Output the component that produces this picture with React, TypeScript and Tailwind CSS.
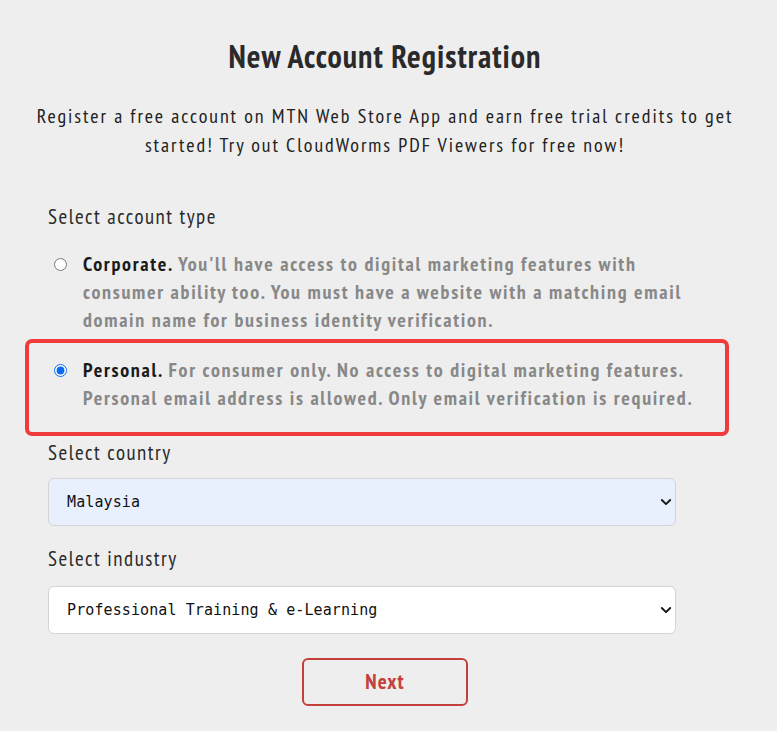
import React from "react";

const NARROW = "font-['PT_Sans_Narrow','Liberation_Sans_Narrow','DejaVu_Sans_Condensed',sans-serif]";

function Chevron() {
  return (
    <svg className="pointer-events-none absolute right-[4px] top-1/2 -translate-y-1/2" width="12" height="12" viewBox="0 0 12 12">
      <path d="M1.8 4 L6 8.2 L10.2 4" fill="none" stroke="#111" strokeWidth="1.8" strokeLinecap="round" strokeLinejoin="round" />
    </svg>
  );
}

function Select({ value, blue }: { value: string; blue?: boolean }) {
  return (
    <div className="relative w-[628px]">
      <select
        defaultValue={value}
        className={`h-[48px] w-full appearance-none rounded-[6px] border border-[#d4d4d4] pl-[18px] pr-8 font-['DejaVu_Sans_Mono','Liberation_Mono',monospace] text-[15px] tracking-[0.1px] text-[#111] outline-none ${blue ? "bg-[#e8f0fe]" : "bg-white"}`}
      >
        <option>{value}</option>
      </select>
      <Chevron />
    </div>
  );
}

export default function App() {
  return (
    <div className={`min-h-[731px] w-full bg-[#eeeeee] ${NARROW} text-[#222]`}>
      <div className="flex flex-col pl-[48px] pr-[55px] pt-[36px]">
        <h1 className="text-center text-[32px] font-bold leading-[40px] tracking-[1px] text-[#2a2a2a]">New Account Registration</h1>
        <p className="mt-[26px] w-[705px] self-center text-center text-[20px] leading-[29px] tracking-[1.95px] text-[#222]">
          Register a free account on MTN Web Store App and earn free trial credits to get started! Try out CloudWorms PDF Viewers for free now!
        </p>

        <div className="mt-[43px] text-[21px] leading-[28px] tracking-[1.5px] text-[#2a2a2a]">Select account type</div>

        <label className="mt-[19px] flex items-start gap-[16px] pl-[6px]">
          <input type="radio" name="type" className="mt-[8px] h-[13px] w-[13px] shrink-0" />
          <span className="w-[632px] text-[20px] font-bold leading-[28px] tracking-[1.7px] text-[#888]">
            <span className="text-[#1a1a1a]">Corporate.</span> You'll have access to digital marketing features with consumer ability too. You must have a website with a matching email domain name for business identity verification.
          </span>
        </label>

        <div className="relative -ml-[23px] mt-[5px] w-[704px] rounded-[7px] border-[4px] border-[#ef3b3b] pb-[20px] pl-[19px] pt-[13px]">
          <label className="flex items-start gap-[16px] pl-[6px]">
            <input type="radio" name="type" defaultChecked className="mt-[8px] h-[13px] w-[13px] shrink-0 accent-[#0b6bf0]" />
            <span className="w-[632px] text-[20px] font-bold leading-[28px] tracking-[1.7px] text-[#888]">
              <span className="text-[#1a1a1a]">Personal.</span> For consumer only. No access to digital marketing features. Personal email address is allowed. Only email verification is required.
            </span>
          </label>
        </div>

        <div className="mt-[3px] text-[21px] leading-[28px] tracking-[1.5px] text-[#2a2a2a]">Select country</div>
        <div className="mt-[11px]">
          <Select value="Malaysia" blue />
        </div>

        <div className="mt-[19px] text-[21px] leading-[28px] tracking-[1.5px] text-[#2a2a2a]">Select industry</div>
        <div className="mt-[13px]">
          <Select value="Professional Training & e-Learning" />
        </div>

        <div className="mt-[24px] flex justify-center">
          <button className="h-[48px] w-[166px] rounded-[6px] border-2 border-[#c3413d] text-[21px] font-bold tracking-[1px] text-[#c3413d]">Next</button>
        </div>
      </div>
    </div>
  );
}
